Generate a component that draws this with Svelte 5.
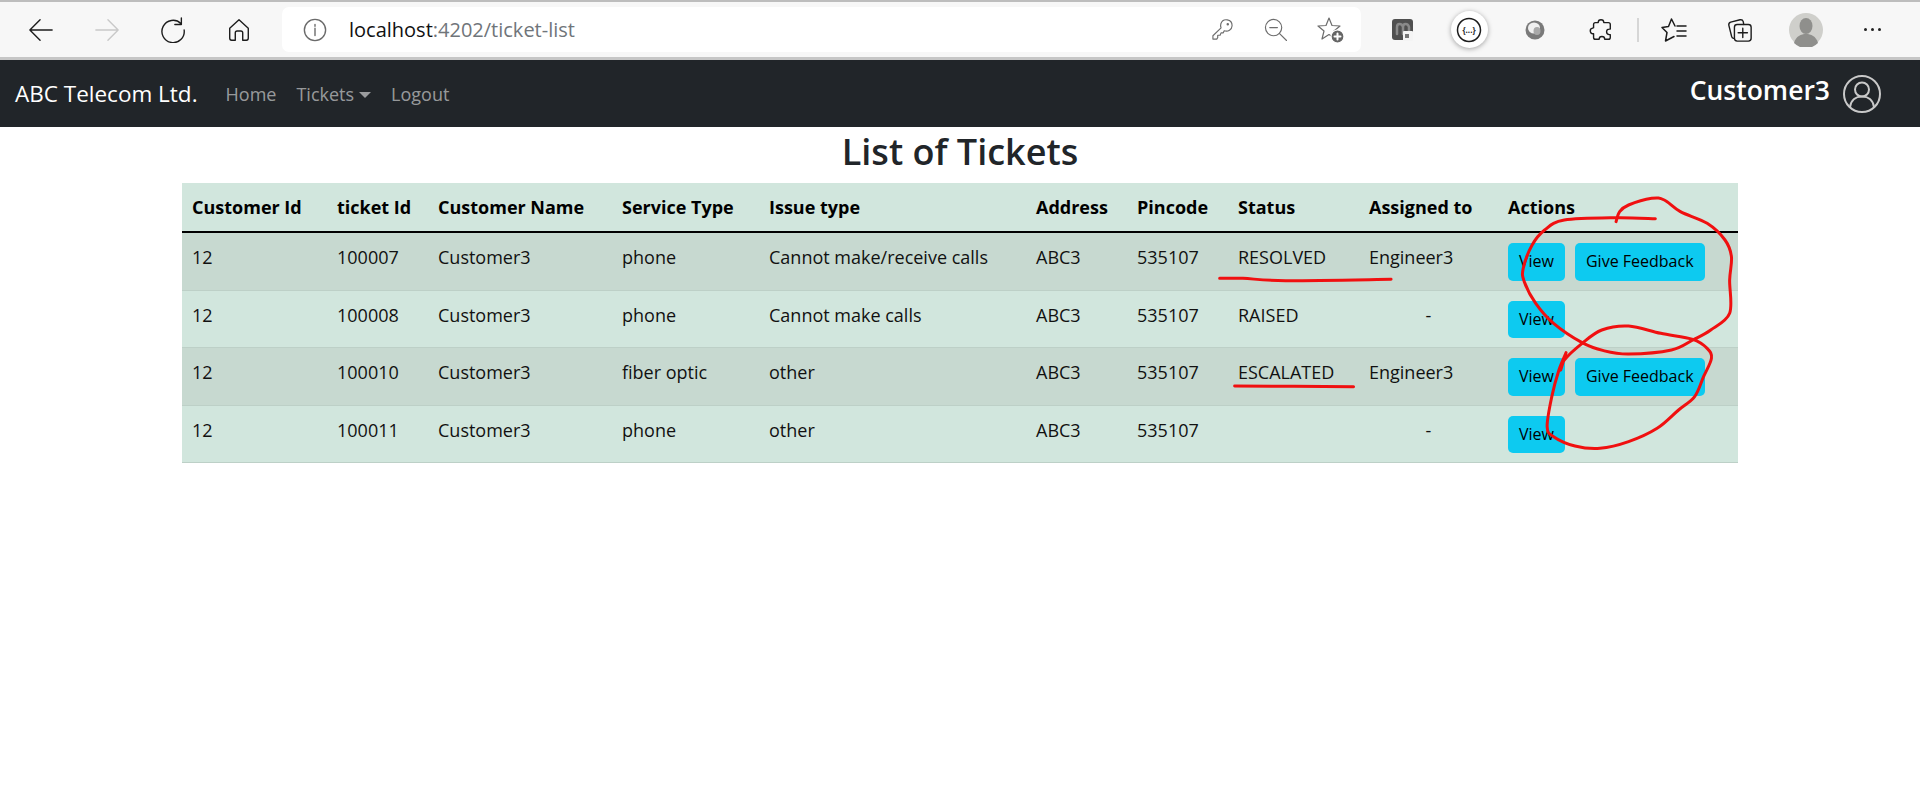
<script>
  const tickets = [
    { custId: 12, id: 100007, name: 'Customer3', service: 'phone', issue: 'Cannot make/receive calls', address: 'ABC3', pin: 535107, status: 'RESOLVED', engineer: 'Engineer3', feedback: true },
    { custId: 12, id: 100008, name: 'Customer3', service: 'phone', issue: 'Cannot make calls', address: 'ABC3', pin: 535107, status: 'RAISED', engineer: '', feedback: false },
    { custId: 12, id: 100010, name: 'Customer3', service: 'fiber optic', issue: 'other', address: 'ABC3', pin: 535107, status: 'ESCALATED', engineer: 'Engineer3', feedback: true },
    { custId: 12, id: 100011, name: 'Customer3', service: 'phone', issue: 'other', address: 'ABC3', pin: 535107, status: '', engineer: '', feedback: false }
  ];

  // hand drawn red marks, points measured off the screenshot
  const marks = [
    [[1275,116],[1165,113],[1020,120],[965,150],[930,195],[905,265],[908,305],[940,370],[990,430],[1070,488],[1130,512],[1200,522],[1320,510],[1380,480],[1430,450],[1483,400],[1483,300],[1488,230],[1470,180],[1420,130],[1345,95],[1300,60],[1265,55],[1200,75],[1175,95],[1165,125]],
    [[1025,518],[1010,570],[1020,540],[1070,490],[1125,450],[1200,438],[1290,460],[1380,478],[1420,505],[1432,535],[1410,590],[1385,650],[1340,690],[1280,745],[1200,785],[1120,805],[1050,798],[990,770],[972,740],[985,650],[1005,570],[1025,518]],
    [[55,295],[120,295],[240,302],[535,298]],
    [[97,618],[430,620]]
  ];

  function smooth(pts) {
    const p = pts.map(([x, y]) => [1200 + x / 2.8, 180 + y / 3]);
    let d = `M${p[0][0]} ${p[0][1]}`;
    for (let i = 0; i < p.length - 1; i++) {
      const a = p[i - 1] || p[i], b = p[i], c = p[i + 1], e = p[i + 2] || c;
      d += ` C${b[0] + (c[0] - a[0]) / 6} ${b[1] + (c[1] - a[1]) / 6} ${c[0] - (e[0] - b[0]) / 6} ${c[1] - (e[1] - b[1]) / 6} ${c[0]} ${c[1]}`;
    }
    return d;
  }
</script>

<div class="page">
  <div class="chrome">
    <div class="slot"><svg viewBox="0 0 28 28"><path d="M26 14H2M13 3 2 14l11 11"/></svg></div>
    <div class="slot faded"><svg viewBox="0 0 28 28"><path d="M2 14h24M15 3l11 11-11 11"/></svg></div>
    <div class="slot"><svg viewBox="0 0 28 28"><path d="M22.500 7A12 12 0 1 0 26 14M23 1v7h-7"/></svg></div>
    <div class="slot"><svg viewBox="0 0 28 28"><path d="M4 12 14 3l10 9v11a2 2 0 0 1-2 2h-4v-8a2 2 0 0 0-2-2h-4a2 2 0 0 0-2 2v8H6a2 2 0 0 1-2-2z"/></svg></div>

    <div class="address">
      <svg class="info" viewBox="0 0 26 26"><circle cx="13" cy="13" r="11.500"/><path d="M13 11v8M13 7v2"/></svg>
      <span class="url">localhost<span class="url-rest">:4202/ticket-list</span></span>
      <div class="address-icons">
        <svg class="gray" viewBox="0 0 24 24"><path d="M22 8a6 6 0 0 0-11.700-2c-.5 1.500-.3 3 .2 4.300L2 18.500V22h4l1-1.500V18h2.500l1-2.500h2.300l1-2.200A6 6 0 0 0 22 8z"/><circle cx="17.500" cy="6.500" r=".7"/></svg>
        <svg class="gray" viewBox="0 0 24 24"><circle cx="10" cy="10" r="8.500"/><path d="M6 10h8M16 16l7.500 7.500"/></svg>
        <svg class="gray star" viewBox="0 0 28 28"><path d="M12 2l3 7.500 8 .5-6 5 2 8-7-4.500L5 23l2-8-6-5 8-.5z"/><circle class="fill" cx="20.500" cy="20.500" r="6.500"/><path class="plus" d="M20.500 17.500v6M17.500 20.500h6"/></svg>
      </div>
    </div>

    <div class="ext-group">
      <div class="slot">
        <svg class="flat" viewBox="0 0 22 22"><rect width="21" height="21" rx="3" fill="#505050"/><path d="M5 15V8c0-4 5-4 6 0v7M11 8c0-4 5-4 6 0v5" stroke="#8a8a8a" stroke-width="2.500" fill="none"/><rect x="11" y="12" width="10" height="10" rx="1" fill="#f4f4f4"/><rect x="13" y="15" width="4" height="4" fill="#777"/></svg>
      </div>
      <div class="slot">
        <div class="ext-round"><svg viewBox="0 0 26 26"><circle cx="13" cy="13" r="11.500"/><text x="13" y="16" text-anchor="middle">{'{...}'}</text></svg></div>
      </div>
      <div class="slot">
        <svg class="flat small" viewBox="0 0 20 20"><circle cx="10" cy="10" r="9.500" fill="#7a7a7a"/><ellipse cx="9" cy="8" rx="6" ry="5.500" fill="#f0f0f0"/><ellipse cx="12" cy="11" rx="3.500" ry="4" fill="#a9a9a9"/></svg>
      </div>
      <div class="slot"><svg viewBox="0 0 28 28"><path d="M11 6a3 3 0 0 1 6 0h5a2 2 0 0 1 2 2v5a3 3 0 0 0-1 0 3 3 0 0 0 0 6 3 3 0 0 0 1 0v3a2 2 0 0 1-2 2h-4a3 3 0 0 0-6 0H8a2 2 0 0 1-2-2v-4a3 3 0 0 1-1-6 3 3 0 0 1 1-.5V8a2 2 0 0 1 2-2z"/></svg></div>
      <div class="divider"></div>
      <div class="slot"><svg viewBox="0 0 26 26"><path d="M14 9 10.500 2 7.500 9.500 1 10.500l5 5L4.500 24l8.500-4.500M16 9h9M16 14h9M16 19h9"/></svg></div>
      <div class="slot"><svg viewBox="0 0 28 28"><path d="M7 23a3 3 0 0 1-2-2L2 9a3 3 0 0 1 2-3.500L14 3a3 3 0 0 1 3.500 2l.5 3"/><rect x="8" y="8" width="18" height="18" rx="3"/><path d="M17 12v10M12 17h10"/></svg></div>
      <div class="slot">
        <svg class="flat avatar" viewBox="0 0 34 34"><circle cx="17" cy="17" r="17" fill="#cfcfcb"/><ellipse cx="17" cy="13" rx="6.500" ry="8" fill="#8f8f8c"/><path d="M5 30c2-7 7-9 12-9s10 2 12 9a17 17 0 0 1-24 0z" fill="#8f8f8c"/></svg>
      </div>
      <div class="slot dots"><span></span><span></span><span></span></div>
    </div>
  </div>

  <nav class="navbar">
    <a class="brand" href="#home">ABC Telecom Ltd.</a>
    <ul class="links">
      <li><a href="#home">Home</a></li>
      <li><a href="#tickets">Tickets<span class="caret"></span></a></li>
      <li><a href="#logout">Logout</a></li>
    </ul>
    <div class="profile">
      <span>Customer3</span>
      <svg viewBox="0 0 38 38"><circle cx="19" cy="19" r="18"/><circle cx="19" cy="14.500" r="7"/><path d="M7 32c1-7 6-10.500 12-10.500S30 25 31 32"/></svg>
    </div>
  </nav>

  <h1>List of Tickets</h1>

  <table>
    <colgroup>
      <col style="width:145px" /><col style="width:101px" /><col style="width:184px" /><col style="width:147px" /><col style="width:267px" />
      <col style="width:101px" /><col style="width:101px" /><col style="width:131px" /><col style="width:139px" /><col style="width:240px" />
    </colgroup>
    <thead>
      <tr>
        <th>Customer Id</th>
        <th>ticket Id</th>
        <th>Customer Name</th>
        <th>Service Type</th>
        <th>Issue type</th>
        <th>Address</th>
        <th>Pincode</th>
        <th>Status</th>
        <th>Assigned to</th>
        <th>Actions</th>
      </tr>
    </thead>
    <tbody>
      {#each tickets as t}
        <tr>
          <td>{t.custId}</td>
          <td>{t.id}</td>
          <td>{t.name}</td>
          <td>{t.service}</td>
          <td>{t.issue}</td>
          <td>{t.address}</td>
          <td>{t.pin}</td>
          <td>{t.status}</td>
          <td class:dash={!t.engineer}>{t.engineer || '-'}</td>
          <td class="actions"><button>View</button>{#if t.feedback}<button>Give Feedback</button>{/if}</td>
        </tr>
      {/each}
    </tbody>
  </table>

  <svg class="scribble" viewBox="0 0 1920 800">
    {#each marks as m}
      <path d={smooth(m)} />
    {/each}
  </svg>
</div>

<style>
:global(body) {
  margin: 0;
  background: #fff;
}

.page {
  position: relative;
  height: 800px;
  overflow: hidden;
  font-family: "Open Sans", "Noto Sans", sans-serif;
  color: #212529;
}

/* browser toolbar */
.chrome {
  box-sizing: border-box;
  height: 60px;
  display: flex;
  align-items: center;
  padding-left: 8px;
  background: #f7f7f7;
  border-top: 2px solid #bdbdbd;
  border-bottom: 3px solid #c6c6c6;
}

.slot {
  width: 66px;
  height: 40px;
  flex: none;
  display: flex;
  align-items: center;
  justify-content: center;
}

.chrome svg {
  width: 26px;
  height: 26px;
  fill: none;
  stroke: #1c1c1c;
  stroke-width: 1.500;
  stroke-linejoin: round;
  stroke-linecap: round;
}

.slot.faded svg {
  stroke: #c9c9c9;
}

.address {
  box-sizing: border-box;
  width: 1079px;
  height: 45px;
  margin-left: 10px;
  flex: none;
  display: flex;
  align-items: center;
  padding-left: 21px;
  background: #fff;
  border-radius: 7px;
}

.chrome .address .info {
  width: 24px;
  height: 24px;
  stroke: #6a6a6a;
}

.url {
  margin-left: 22px;
  font-size: 20px;
  color: #111;
}

.url-rest {
  color: #70757a;
}

.address-icons {
  margin-left: auto;
  margin-right: 16px;
  display: flex;
  align-items: center;
  gap: 30px;
}

.chrome .address-icons .gray {
  width: 23px;
  height: 23px;
  stroke: #6d6d6d;
  stroke-width: 1.200;
}

.chrome .address-icons .star {
  width: 28px;
  height: 28px;
}

.address-icons .fill {
  fill: #666;
  stroke: #fff;
}

.address-icons .plus {
  stroke: #fff;
  stroke-width: 2;
}

.ext-group {
  display: flex;
  align-items: center;
  margin-left: 9px;
}

.chrome svg.flat {
  stroke: none;
  width: 22px;
  height: 22px;
}

.chrome svg.small {
  width: 20px;
  height: 20px;
}

.chrome svg.avatar {
  width: 34px;
  height: 34px;
}

.ext-round {
  width: 37px;
  height: 37px;
  border-radius: 50%;
  background: #fff;
  box-shadow: 0 1px 5px rgba(0, 0, 0, 0.35);
  display: flex;
  align-items: center;
  justify-content: center;
}

.ext-round text {
  font-size: 8px;
  font-weight: 700;
  fill: #222;
  stroke: none;
}

.divider {
  width: 2px;
  height: 24px;
  margin: 0 2px 0 3px;
  background: #d6d6d6;
  flex: none;
}

.dots {
  gap: 4px;
}

.dots span {
  width: 3px;
  height: 3px;
  border-radius: 50%;
  background: #222;
}

/* navbar */
.navbar {
  box-sizing: border-box;
  height: 67px;
  display: flex;
  align-items: center;
  padding: 0 39px 0 15px;
  background: #212529;
}

.brand {
  font-size: 22.500px;
  color: #fff;
  text-decoration: none;
}

.links {
  display: flex;
  gap: 20px;
  margin: 0 0 0 28px;
  padding: 0;
  list-style: none;
}

.links a {
  font-size: 18px;
  color: rgba(255, 255, 255, 0.55);
  text-decoration: none;
}

.caret {
  display: inline-block;
  margin-left: 5px;
  vertical-align: 3px;
  border-top: 6px solid rgba(255, 255, 255, 0.55);
  border-left: 6px solid transparent;
  border-right: 6px solid transparent;
}

.profile {
  margin-left: auto;
  display: flex;
  align-items: center;
  gap: 13px;
  color: #fff;
  font-size: 26.500px;
  font-weight: 600;
}

.profile span {
  margin-bottom: 7px;
}

.profile svg {
  width: 38px;
  height: 38px;
  fill: none;
  stroke: #c9c9c9;
  stroke-width: 2;
}

h1 {
  margin: 0;
  height: 56px;
  line-height: 50px;
  text-align: center;
  font-size: 36px;
  font-weight: 600;
}

/* ticket table */
table {
  width: 1556px;
  margin-left: 182px;
  table-layout: fixed;
  border-collapse: collapse;
  background: #d1e6dd;
  font-size: 18px;
  color: #111;
}

th {
  height: 48px;
  padding: 0 10px;
  text-align: left;
  font-weight: 700;
  color: #000;
  border-bottom: 2px solid #000;
}

td {
  padding: 11px 10px 10px;
  vertical-align: top;
  line-height: 27px;
  border-bottom: 1px solid #bdd0c7;
}

tbody tr:nth-child(odd) {
  background: #c7d9d0;
}

td.dash {
  text-align: center;
}

td.actions {
  padding: 10px 10px 9px;
}

button {
  height: 37.500px;
  padding: 0 11px;
  border: 0;
  border-radius: 5px;
  vertical-align: top;
  background: #0dcaf0;
  font: inherit;
  font-size: 16px;
  color: #000;
}

button + button {
  margin-left: 10px;
}

.scribble {
  position: absolute;
  top: 0;
  left: 0;
  width: 1920px;
  height: 800px;
  fill: none;
  stroke: #f01010;
  stroke-width: 3;
  stroke-linecap: round;
  stroke-linejoin: round;
  pointer-events: none;
}
</style>
